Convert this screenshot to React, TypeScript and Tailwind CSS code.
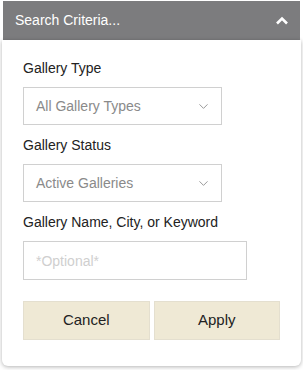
import { ChevronDown } from 'lucide-react'

function SelectBox({ value }: { value: string }) {
  return (
    <div className="flex h-[38px] w-[199px] items-center justify-between border border-[#d0d0d0] bg-white pl-3 pr-[10px]">
      <span className="text-[14px] text-[#8a8a8a]">{value}</span>
      <ChevronDown size={15} strokeWidth={1.4} className="text-[#8a8a8a]" />
    </div>
  )
}

export default function App() {
  return (
    <div className="h-[370px] w-[303px] bg-white font-['Liberation_Sans',Arial,sans-serif]">
      <div className="relative mx-[2px] pt-[1px]">
        <div className="flex h-[39px] items-center justify-between bg-[#7c7c7e] pl-3 pr-[11px] mx-px">
          <span className="text-[14px] text-white">Search Criteria...</span>
          <svg width="14" height="10" viewBox="0 0 14 10" fill="none">
            <path d="M2 7.5L7 2.5L12 7.5" stroke="white" strokeWidth="2.6" />
          </svg>
        </div>
        <div className="rounded-b-[6px] bg-white px-[21px] pb-[26px] pt-[19px] shadow-[0_1px_4px_rgba(0,0,0,0.3)]">
          <label className="block text-[14px] leading-[18px] text-[#222]">Gallery Type</label>
          <div className="mt-[10px]">
            <SelectBox value="All Gallery Types" />
          </div>
          <label className="mt-[11px] block text-[14px] leading-[18px] text-[#222]">Gallery Status</label>
          <div className="mt-[10px]">
            <SelectBox value="Active Galleries" />
          </div>
          <label className="mt-[11px] block text-[14px] leading-[18px] text-[#222]">Gallery Name, City, or Keyword</label>
          <input
            type="text"
            placeholder="*Optional*"
            className="mt-[10px] block h-[39px] w-[224px] border border-[#d0d0d0] px-3 text-[14px] placeholder:text-[#cfcfcf] focus:outline-none"
          />
          <div className="mt-[21px] flex gap-1">
            <button className="h-[39px] w-[128px] border border-[#e4dfcf] bg-[#efe9d5] text-[15px] text-[#222]">Cancel</button>
            <button className="h-[39px] w-[128px] border border-[#e4dfcf] bg-[#efe9d5] text-[15px] text-[#222]">Apply</button>
          </div>
        </div>
      </div>
    </div>
  )
}
